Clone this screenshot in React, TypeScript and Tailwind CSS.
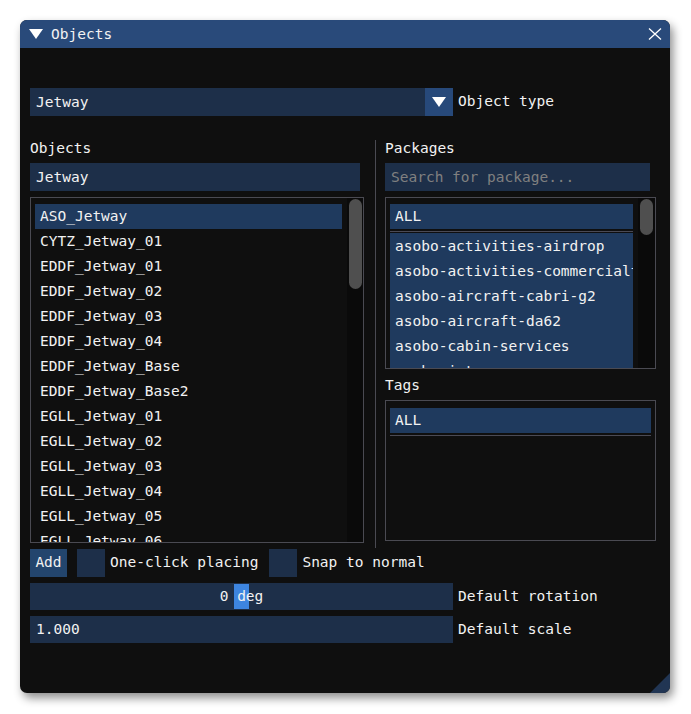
import React from 'react'

const OBJECTS = [
  'ASO_Jetway',
  'CYTZ_Jetway_01',
  'EDDF_Jetway_01',
  'EDDF_Jetway_02',
  'EDDF_Jetway_03',
  'EDDF_Jetway_04',
  'EDDF_Jetway_Base',
  'EDDF_Jetway_Base2',
  'EGLL_Jetway_01',
  'EGLL_Jetway_02',
  'EGLL_Jetway_03',
  'EGLL_Jetway_04',
  'EGLL_Jetway_05',
  'EGLL_Jetway_06',
]

const PACKAGES = [
  'asobo-activities-airdrop',
  'asobo-activities-commercialtraffic',
  'asobo-aircraft-cabri-g2',
  'asobo-aircraft-da62',
  'asobo-cabin-services',
  'asobo-jetways',
]

function DownTriangle() {
  return (
    <svg width="14" height="10" viewBox="0 0 14 10" className="shrink-0">
      <polygon points="0,0 14,0 7,10" fill="#ffffff" />
    </svg>
  )
}

function Scrollbar({ width, grab }: { width: string; grab: string }) {
  return (
    <div className={`${width} h-full bg-[#0a0a0a] shrink-0 pt-[1px] pl-[2px]`}>
      <div className={`w-[13px] ${grab} rounded-full bg-[#4f4f4f]`} />
    </div>
  )
}

export default function App() {
  return (
    <div className="min-h-screen bg-white pt-[20px] pl-[20px] font-['DejaVu_Sans_Mono',monospace] text-[14.5px] text-[#f2f2f2]">
      <div className="relative w-[650px] h-[673px] rounded-[7px] bg-[#0f0f0f] overflow-hidden shadow-[3px_5px_10px_rgba(0,0,0,0.45)]">
        {/* title bar */}
        <div className="h-[28px] bg-[#294a7a] flex items-center pl-[9px] pr-[8px]">
          <DownTriangle />
          <span className="ml-[8px] leading-[28px]">Objects</span>
          <div className="flex-1" />
          <svg width="14" height="12" viewBox="0 0 14 12">
            <path d="M1 0.5 L13 11.5 M13 0.5 L1 11.5" stroke="#ffffff" strokeWidth="1.3" />
          </svg>
        </div>

        <div className="pl-[10px] pt-[40px]">
          {/* object type combo */}
          <div className="flex items-center h-[28px]">
            <div className="w-[395px] h-full bg-[#1d2f49] pl-[6px] leading-[28px]">Jetway</div>
            <div className="w-[28px] h-full bg-[#27497a] flex items-center justify-center">
              <DownTriangle />
            </div>
            <span className="ml-[5px]">Object type</span>
          </div>

          <div className="flex items-start mt-[21px]">
            {/* objects column */}
            <div className="w-[334px] flex flex-col">
              <div className="h-[23px] leading-[23px]">Objects</div>
              <div className="mt-[3px] w-[330px] h-[28px] bg-[#1d2f49] pl-[6px] leading-[28px]">Jetway</div>
              <div className="mt-[6px] h-[346px] border border-[#4a4a52] flex overflow-hidden">
                <div className="pl-[4px] pt-[6px] flex-1 overflow-hidden">
                  {OBJECTS.map((o, i) => (
                    <div
                      key={o}
                      className={`w-[307px] h-[25px] leading-[25px] pl-[5px] whitespace-nowrap ${i === 0 ? 'bg-[#1f3a5e]' : ''}`}
                    >
                      {o}
                    </div>
                  ))}
                </div>
                <Scrollbar width="w-[16px]" grab="h-[90px]" />
              </div>
            </div>

            <div className="ml-[11px] mt-[3px] w-[1px] h-[408px] bg-[#4a4a52]" />

            {/* packages / tags column */}
            <div className="ml-[9px] w-[271px] flex flex-col">
              <div className="h-[23px] leading-[23px]">Packages</div>
              <div className="mt-[3px] w-[265px] h-[28px] bg-[#1d2f49] pl-[6px] leading-[28px] text-[#808080]">
                Search for package...
              </div>
              <div className="mt-[6px] h-[172px] border border-[#4a4a52] flex overflow-hidden">
                <div className="pl-[4px] pt-[6px] w-[248px] overflow-hidden">
                  <div className="w-[243px] h-[25px] leading-[25px] pl-[5px] bg-[#1f3a5e]">ALL</div>
                  <div className="w-[243px] h-[4px] flex items-center">
                    <div className="w-full h-[1px] bg-[#4a4a55]" />
                  </div>
                  <div className="w-[243px] bg-[#1f3a5e] pt-[1px]">
                    {PACKAGES.map((p) => (
                      <div key={p} className="h-[25px] leading-[25px] pl-[5px] whitespace-nowrap overflow-hidden">
                        {p}
                      </div>
                    ))}
                  </div>
                </div>
                <div className="flex-1" />
                <Scrollbar width="w-[17px]" grab="h-[36px]" />
              </div>

              <div className="mt-[5px] h-[23px] leading-[23px]">Tags</div>
              <div className="mt-[3px] h-[141px] border border-[#4a4a52] pl-[4px] pt-[7px]">
                <div className="w-[261px] h-[25px] leading-[25px] pl-[5px] bg-[#1f3a5e]">ALL</div>
                <div className="w-[261px] h-[1px] mt-[2px] bg-[#4a4a55]" />
              </div>
            </div>
          </div>

          {/* placing options */}
          <div className="mt-[1px] h-[28px] flex items-center">
            <div className="w-[37px] h-full bg-[#23456d] flex items-center justify-center">Add</div>
            <div className="ml-[10px] w-[28px] h-full bg-[#1d2f49]" />
            <span className="ml-[5px]">One-click placing</span>
            <div className="ml-[11px] w-[28px] h-full bg-[#1d2f49]" />
            <span className="ml-[5px]">Snap to normal</span>
          </div>

          <div className="mt-[6px] h-[27px] flex items-center">
            <div className="relative w-[423px] h-full bg-[#1d2f49] flex items-center justify-center">
              <div className="absolute left-[204px] top-[1px] w-[15px] h-[25px] bg-[#3d85e0]" />
              <span className="relative">0 deg</span>
            </div>
            <span className="ml-[5px]">Default rotation</span>
          </div>

          <div className="mt-[6px] h-[27px] flex items-center">
            <div className="w-[423px] h-full bg-[#1d2f49] pl-[6px] leading-[27px]">1.000</div>
            <span className="ml-[5px]">Default scale</span>
          </div>
        </div>

        {/* resize grip */}
        <svg width="20" height="20" viewBox="0 0 20 20" className="absolute right-0 bottom-0">
          <polygon points="20,0 20,20 0,20" fill="#213553" />
        </svg>
      </div>
    </div>
  )
}
